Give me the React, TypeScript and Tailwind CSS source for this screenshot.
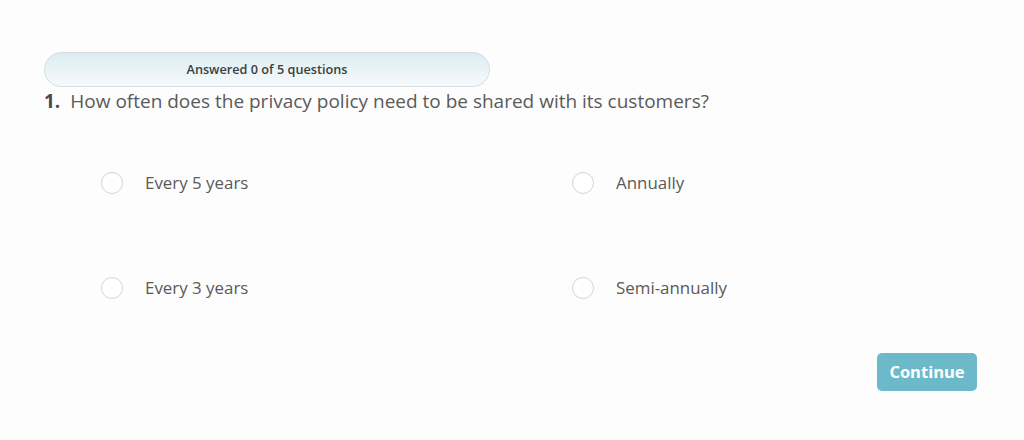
import React from "react";

const options = ["Every 5 years", "Annually", "Every 3 years", "Semi-annually"];

export default function App() {
  return (
    <div
      className="w-[1024px] h-[440px] bg-[#fdfdfd] text-[#555555] overflow-hidden"
      style={{ fontFamily: '"Open Sans", sans-serif' }}
    >
      <div className="pt-[52px] pl-[44px] pr-[47px]">
        <div className="w-[446px] h-[35px] rounded-full border border-[#d6dde0] bg-gradient-to-b from-[#dcecf1] to-[#f6fbfc] flex items-center justify-center">
          <span className="text-[12.7px] font-semibold text-[#3d3d3d]">Answered 0 of 5 questions</span>
        </div>
        <div className="mt-[1px] text-[19px] leading-[26px] text-[#5a5a5a]">
          <span className="font-bold text-[#4a4a4a]">1.</span>
          <span className="ml-[10px]">How often does the privacy policy need to be shared with its customers?</span>
        </div>
        <div className="ml-[57px] mt-[58px] grid grid-cols-[471px_1fr] gap-y-[83px]">
          {options.map((o) => (
            <label key={o} className="flex items-center h-[22px] cursor-pointer">
              <span className="w-[22px] h-[22px] rounded-full border border-[#d4d4d4] bg-white shrink-0" />
              <span className="ml-[22px] text-[16.9px] text-[#5a5a5a]">{o}</span>
            </label>
          ))}
        </div>
        <div className="flex justify-end mt-[54px]">
          <button className="w-[100px] h-[38px] rounded-[5px] bg-[#6cbac9] text-white text-[16.5px] font-bold">
            Continue
          </button>
        </div>
      </div>
    </div>
  );
}
